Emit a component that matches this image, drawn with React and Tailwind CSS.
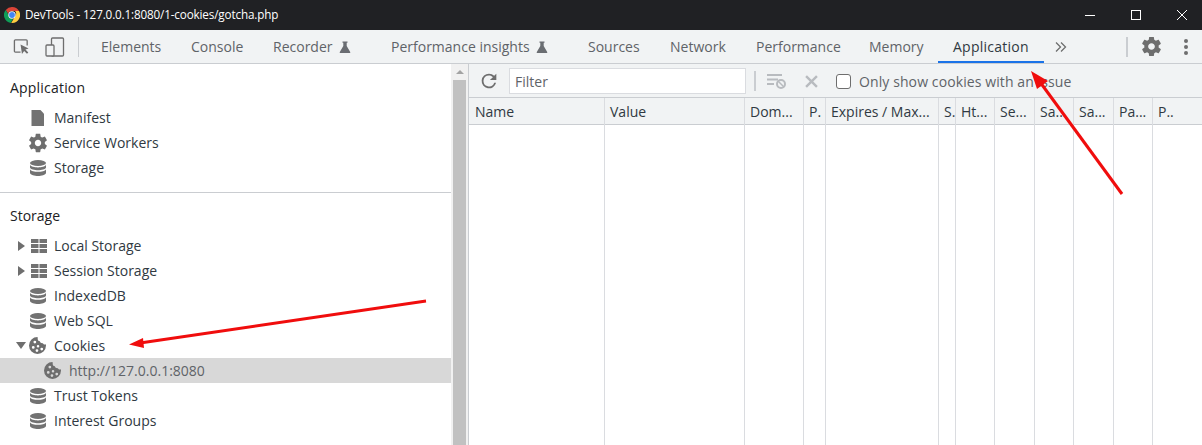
const Flask = ({ className = "" }) => (
  <svg viewBox="0 0 12 12" className={`w-3 h-3 ${className}`}><path fill="#6a6d72" d="M3.500 0.500h5v1.300h-.8v3.200L11.200 11c.3.5 0 1-.6 1H1.400c-.6 0-.9-.5-.6-1L4.300 5V1.800h-.8z" /></svg>
);
const Db = () => (
  <svg viewBox="0 0 16 16" className="w-4 h-4"><g fill="#727272"><ellipse cx="8" cy="3" rx="8" ry="3" /><path d="M0 4.800C1 6.800 4.500 7.400 8 7.400s7-.6 8-2.600v2.700C15.500 9.300 11.500 10.200 8 10.200S.5 9.300 0 7.500z" /><path d="M0 9.200C1 11.200 4.500 11.800 8 11.800s7-.6 8-2.600v3.800C15.500 15 11.500 16 8 16S.5 15 0 13z" /></g></svg>
);
const GridIcon = () => (
  <svg viewBox="0 0 16 16" className="w-4 h-4 ml-[1px] -mr-[1px]"><g fill="#727272"><rect x="0" y="1" width="7.500" height="4" /><rect x="8.500" y="1" width="7.500" height="4" /><rect x="0" y="6" width="7.500" height="4" /><rect x="8.500" y="6" width="7.500" height="4" /><rect x="0" y="11" width="7.500" height="4" /><rect x="8.500" y="11" width="7.500" height="4" /></g></svg>
);
const Cookie = () => (
  <svg viewBox="0 0 16 16" className="w-[17px] h-[17px] -ml-[1px]"><path fill="#6e6e6e" fillRule="evenodd" d="M8 0a8 8 0 1 0 8 8c0-.5 0-.8-.1-1.100-1.100.5-2.400 0-2.800-1.100-1.300.3-2.600-.4-2.900-1.700C8.900 4.100 8 2.800 8.200 1.500 8.200 1 8.200.5 8 0z M5.500 3.500a1.300 1.300 0 1 0 0 2.600 1.300 1.300 0 0 0 0-2.600z M4 8.500a1.300 1.300 0 1 0 0 2.600 1.300 1.300 0 0 0 0-2.600z M8.500 7.500a1.200 1.200 0 1 0 0 2.400 1.200 1.200 0 0 0 0-2.400z M7.500 11.500a1.300 1.300 0 1 0 0 2.600 1.300 1.300 0 0 0 0-2.600z M12 10a1.300 1.300 0 1 0 0 2.600 1.300 1.300 0 0 0 0-2.600z" /></svg>
);
const Doc = () => (
  <svg viewBox="0 0 16 16" className="w-4 h-4"><path fill="#727272" d="M1.500 -0.500H10l4 4.300V16.500H1.500z" /></svg>
);
const Gear = ({ size = 16, color = "#6e6e6e", className = "" }) => (
  <svg viewBox="0 0 24 24" style={{ width: size, height: size }} className={className}><path fill={color} d="M19.430 12.980c.04-.32.070-.64.070-.98s-.03-.66-.07-.98l2.110-1.650c.19-.15.240-.42.120-.64l-2-3.460c-.12-.22-.39-.3-.61-.22l-2.490 1c-.52-.4-1.080-.73-1.690-.98l-.38-2.650C14.460 2.180 14.250 2 14 2h-4c-.25 0-.46.18-.49.420l-.38 2.650c-.61.25-1.170.59-1.690.98l-2.490-1c-.23-.09-.49 0-.61.22l-2 3.460c-.13.22-.07.49.12.64l2.110 1.650c-.04.32-.07.65-.07.98s.03.66.07.98l-2.110 1.650c-.19.15-.24.42-.12.64l2 3.460c.12.22.39.3.61.22l2.490-1c.52.4 1.080.73 1.690.98l.38 2.650c.03.24.24.42.49.42h4c.25 0 .46-.18.49-.42l.38-2.650c.61-.25 1.170-.59 1.690-.98l2.490 1c.23.09.49 0 .61-.22l2-3.460c.12-.22.07-.49-.12-.64l-2.110-1.650zM12 15.500c-1.930 0-3.500-1.570-3.500-3.500s1.570-3.500 3.500-3.500 3.500 1.570 3.500 3.500-1.570 3.500-3.500 3.500z" /></svg>
);

const tabs = [
  ["Elements", 90], ["Console", 82], ["Recorder", 118, true], ["Performance insights", 197, true],
  ["Sources", 82], ["Network", 86], ["Performance", 113], ["Memory", 84],
];
const cols = [["Name", 136], ["Value", 140], ["Dom...", 59], ["P.", 22], ["Expires / Max...", 113], ["S.", 17], ["Ht...", 39], ["Se...", 40], ["Sa...", 39], ["Sa...", 40], ["Pa...", 39], ["P..", 49]];

const Row = ({ icon, label, arrow, selected, indent }) => (
  <div className={`h-[25px] flex items-center ${selected ? "bg-[#d8d8d8] text-[#5f6368]" : "text-[#303942]"}`}>
    <div className="w-[12px] shrink-0" />
    <div className="w-[18px] h-[25px] flex items-center justify-center shrink-0">
      {arrow === "right" && <div className="w-0 h-0 border-y-[5px] border-y-transparent border-l-[7px] border-l-[#6e6e6e]" />}
      {arrow === "down" && <div className="w-0 h-0 border-x-[5px] border-x-transparent border-t-[7px] border-t-[#6e6e6e]" />}
    </div>
    <div className={`flex items-center ${indent ? "ml-[15px] mr-[8px]" : "mr-[8px]"}`}>{icon}</div>
    <span className="whitespace-nowrap">{label}</span>
  </div>
);

export default function App() {
  return (
    <div className="relative w-[1202px] h-[445px] overflow-hidden bg-white text-[14px] font-['Open_Sans','Noto_Sans',sans-serif] text-[#303942]">
      {/* Title bar */}
      <div className="h-[30px] bg-[#202124] flex items-center text-white text-[11.7px] tracking-[-0.15px] overflow-hidden">
        <svg viewBox="0 0 16 16" className="w-4 h-4 ml-[4px] mr-[5px]">
          <path fill="#db4437" d="M8 0a8 8 0 0 1 7 4H8a4 4 0 0 0-3.800 2.800L1.800 2.900A8 8 0 0 1 8 0z" />
          <path fill="#0f9d58" d="M1.800 2.900l3.500 6.300A3.900 3.900 0 0 0 9 11.900L6.700 15.900A8 8 0 0 1 1.800 2.900z" />
          <path fill="#ffcd40" d="M15 4a8 8 0 0 1-7 12h-.8l3.500-6.100A3.900 3.900 0 0 0 11 4z" />
          <circle cx="8" cy="8" r="3.700" fill="#fff" />
          <circle cx="8" cy="8" r="2.900" fill="#4285f4" />
        </svg>
        <span>DevTools - 127.0.0.1:8080/1-cookies/gotcha.php</span>
        <div className="ml-auto -mr-[3px] flex items-center">
          <div className="w-[46px] h-[30px] flex items-center justify-center"><div className="w-[10px] h-px bg-white" /></div>
          <div className="w-[46px] h-[30px] flex items-center justify-center"><div className="w-[10px] h-[10px] border border-white" /></div>
          <div className="w-[46px] h-[30px] flex items-center justify-center">
            <svg viewBox="0 0 10 10" className="w-[10px] h-[10px]"><path d="M0 0L10 10M10 0L0 10" stroke="#fff" strokeWidth="1" /></svg>
          </div>
        </div>
      </div>
      {/* Tab bar */}
      <div className="h-[34px] bg-[#f1f3f4] border-b border-[#cacdd1] flex items-center text-[#5f6368]">
        <svg viewBox="0 0 18 18" className="w-[17px] h-[17px] ml-[13px]" fill="none">
          <path d="M8 15H2.500a1 1 0 0 1-1-1V3a1 1 0 0 1 1-1h11.500a1 1 0 0 1 1 1v5" stroke="#6e6e6e" strokeWidth="1.400" />
          <path d="M8 7l8.500 4-3.300 1.300 3 3-1.400 1.400-3-3L9.500 17z" fill="#6e6e6e" />
        </svg>
        <svg viewBox="0 0 20 20" className="w-[20px] h-[20px] ml-[15px]" fill="none" stroke="#6e6e6e" strokeWidth="1.300">
          <rect x="6.500" y="1" width="12" height="18" rx="1" />
          <rect x="1" y="8" width="8" height="11" rx="1" fill="#f1f3f4" />
        </svg>
        <div className="w-px h-[20px] bg-[#cacdd1] ml-[13px] mr-[7px]" />
        {tabs.map(([t, w, f]) => (
          <div key={t} style={{ width: w }} className="h-[33px] pl-[15px] flex items-center gap-[6px] shrink-0 whitespace-nowrap">
            <span>{t}</span>{f && <Flask />}
          </div>
        ))}
        <div className="relative w-[106px] h-[33px] pl-[15px] flex items-center shrink-0 text-[#303942]">
          <span className="tracking-[0.25px]">Application</span>
          <div className="absolute left-0 right-0 bottom-0 h-[2px] bg-[#1a73e8]" />
        </div>
        <svg viewBox="0 0 12 10" className="w-[12px] h-[10px] ml-[11px]" fill="none" stroke="#6e6e6e" strokeWidth="1.300">
          <path d="M1 0.500L5.500 5 1 9.500M6 0.500L10.500 5 6 9.500" />
        </svg>
        <div className="w-[2px] h-[20px] bg-[#cacdd1] ml-[59px]" />
        <Gear size={23} className="ml-[12px]" />
        <svg viewBox="0 0 4 16" className="w-[4px] h-[16px] ml-[21px]" fill="#6e6e6e"><circle cx="2" cy="2" r="2" /><circle cx="2" cy="8" r="2" /><circle cx="2" cy="14" r="2" /></svg>
      </div>
      <div className="flex h-[381px]">
        {/* Sidebar */}
        <div className="w-[451px] shrink-0">
          <div className="h-[129px] border-b border-[#cacdd1]">
            <div className="h-[41px] pl-[10px] pt-[12px] leading-[24px] tracking-[0.2px] text-[#202124]">Application</div>
            <Row icon={<Doc />} label="Manifest" />
            <Row icon={<Gear size={22} className="-mx-[3px]" />} label="Service Workers" />
            <Row icon={<Db />} label="Storage" />
          </div>
          <div className="h-[40px] pl-[10px] pt-[11px] leading-[24px] text-[#202124]">Storage</div>
          <Row arrow="right" icon={<GridIcon />} label="Local Storage" />
          <Row arrow="right" icon={<GridIcon />} label="Session Storage" />
          <Row icon={<Db />} label="IndexedDB" />
          <Row icon={<Db />} label="Web SQL" />
          <Row arrow="down" icon={<Cookie />} label="Cookies" />
          <Row indent selected icon={<Cookie />} label="http://127.0.0.1:8080" />
          <Row icon={<Db />} label="Trust Tokens" />
          <Row icon={<Db />} label="Interest Groups" />
        </div>
        {/* Scrollbar */}
        <div className="w-[17px] shrink-0 bg-[#f1f1f1] flex flex-col items-center">
          <div className="h-[16px] flex items-center justify-center">
            <div className="w-0 h-0 border-x-[4px] border-x-transparent border-b-[4px] border-b-[#a3a3a3]" />
          </div>
          <div className="w-[13px] flex-1 bg-[#c1c1c1]" />
        </div>
        {/* Main */}
        <div className="flex-1 border-l border-[#cacdd1] flex flex-col min-w-0">
          <div className="h-[34px] pt-[1px] bg-[#f1f3f4] border-b border-[#cacdd1] flex items-center shrink-0 text-[#5f6368]">
            <svg viewBox="0 0 24 24" className="w-[22px] h-[22px] ml-[9px] -mt-[1px]"><path fill="#6e6e6e" d="M17.650 6.350A7.960 7.960 0 0 0 12 4a8 8 0 1 0 7.730 10h-2.080A6 6 0 1 1 12 6c1.660 0 3.140.69 4.220 1.780L13 11h7V4z" /></svg>
            <div className="w-[237px] h-[26px] ml-[9px] bg-white border border-[#dadce0] pl-[5px] flex items-center">Filter</div>
            <div className="w-[2px] h-[20px] bg-[#cacdd1] ml-[8px]" />
            <svg viewBox="0 0 20 16" className="w-[20px] h-[16px] ml-[11px]" fill="#b8bbbf">
              <rect x="0" y="1" width="15" height="2" /><rect x="0" y="5.500" width="11" height="2" /><rect x="0" y="10" width="7" height="2" />
              <circle cx="14" cy="11" r="4" fill="none" stroke="#b8bbbf" strokeWidth="2" />
              <path d="M11 8l6 6" stroke="#b8bbbf" strokeWidth="1.500" />
            </svg>
            <svg viewBox="0 0 12 12" className="w-[13px] h-[13px] ml-[18px]"><path d="M1 1L11 11M11 1L1 11" stroke="#b8bbbf" strokeWidth="2.200" /></svg>
            <div className="w-[15px] h-[15px] ml-[18px] border border-[#6e6e6e] rounded-[3px] bg-white" />
            <span className="ml-[8px] whitespace-nowrap tracking-[0.1px]">Only show cookies with an issue</span>
          </div>
          <div className="flex flex-1">
            {cols.map(([c, w], i) => (
              <div key={i} style={{ width: w }} className="shrink-0 border-r border-[#dadce0] last:border-r-0 flex flex-col">
                <div className={`h-[27px] bg-[#f1f3f4] border-b border-[#cacdd1] flex items-center overflow-hidden whitespace-nowrap text-[#303942] ${i === 0 ? "pl-[6px]" : "pl-[5px]"}`}>{c}</div>
              </div>
            ))}
          </div>
        </div>
      </div>
      {/* Annotation arrows */}
      <svg className="absolute inset-0 pointer-events-none" width="1202" height="445" viewBox="0 0 1202 445">
        <path d="M1122 194L1040 82" stroke="#f00d0d" strokeWidth="3" fill="none" />
        <path d="M1031 71L1048 81 1037 89z" fill="#f00d0d" />
        <path d="M426 301L140 343" stroke="#f00d0d" strokeWidth="3" fill="none" />
        <path d="M129 344.500L143 338 144 348z" fill="#f00d0d" />
      </svg>
    </div>
  );
}
